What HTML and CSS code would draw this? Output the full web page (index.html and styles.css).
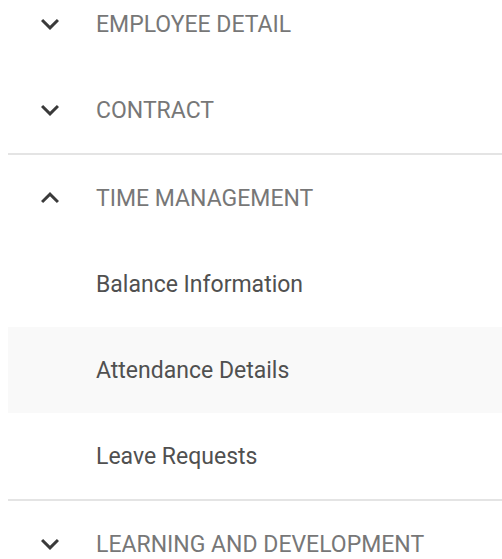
FILE: index.html
```html
<!DOCTYPE html>
<html lang="en">
<head>
<meta charset="utf-8">
<title>Employee sections</title>
<link rel="stylesheet" href="styles.css">
</head>
<body>
<nav class="sections">
  <div class="group">
    <div class="row header">
      <svg class="chev" viewBox="0 0 24 24"><path d="M16.59 8.59 12 13.17 7.41 8.59 6 10l6 6 6-6z"/></svg>
      <span>EMPLOYEE DETAIL</span>
    </div>
    <div class="row header">
      <svg class="chev" viewBox="0 0 24 24"><path d="M16.59 8.59 12 13.17 7.41 8.59 6 10l6 6 6-6z"/></svg>
      <span>CONTRACT</span>
    </div>
  </div>
  <div class="group">
    <div class="row header">
      <svg class="chev" viewBox="0 0 24 24"><path d="M12 8l-6 6 1.41 1.41L12 10.83l4.59 4.58L18 14z"/></svg>
      <span>TIME MANAGEMENT</span>
    </div>
    <div class="row item">Balance Information</div>
    <div class="row item active">Attendance Details</div>
    <div class="row item">Leave Requests</div>
  </div>
  <div class="group">
    <div class="row header">
      <svg class="chev" viewBox="0 0 24 24"><path d="M16.59 8.59 12 13.17 7.41 8.59 6 10l6 6 6-6z"/></svg>
      <span>LEARNING AND DEVELOPMENT</span>
    </div>
  </div>
</nav>
</body>
</html>
```
FILE: styles.css
```css
html, body {
  margin: 0;
  padding: 0;
  background: #ffffff;
  overflow: hidden;
}

.sections {
  margin: -19px 0 0 8px;
  font-family: Roboto, "Liberation Sans", sans-serif;
  font-size: 23px;
}

.group + .group {
  border-top: 2px solid #e4e4e4;
}

.row {
  height: 86px;
  display: flex;
  align-items: center;
  padding-left: 88px;
  box-sizing: border-box;
}

.header {
  padding-left: 24px;
  color: #777777;
}

.chev {
  width: 36px;
  height: 36px;
  fill: #3a3a3a;
  margin-right: 28px;
  flex: none;
}

.item {
  color: #505050;
}

.item.active {
  background: #f9f9f9;
}
```
